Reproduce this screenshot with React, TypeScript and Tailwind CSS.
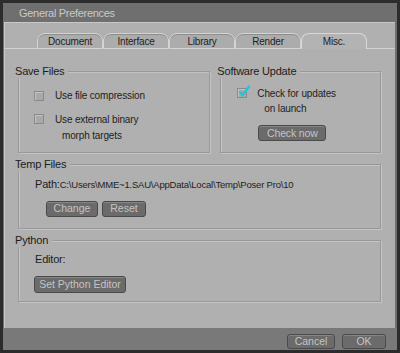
import type { ReactNode } from 'react';

const Btn = ({ children, className }: { children: ReactNode; className: string }) => (
  <button
    className={`rounded-[3px] border border-[#4a4a4a] bg-[#6b6b6b] text-[10.5px] leading-none text-[#c4c4c4] shadow-[inset_0_1px_0_#858585] ${className}`}
  >
    {children}
  </button>
);

const Box = ({ checked }: { checked?: boolean }) => (
  <span className="relative block h-[10px] w-[10px] shrink-0 border border-[#8a8a8a] bg-[#a9a9a9] shadow-[inset_1px_1px_0_#c2c2c2]">
    {checked && (
      <svg className="absolute -top-[4px] left-[0px]" width="13" height="12" viewBox="0 0 13 12">
        <path d="M1.5 6.5 L4.5 10 L11.5 1" fill="none" stroke="#19c4de" strokeWidth="2.2" />
      </svg>
    )}
  </span>
);

const Group = ({ title, className, children }: { title: string; className: string; children: ReactNode }) => (
  <div className={`relative border border-[#999999] shadow-[inset_1px_1px_0_#c3c3c3,1px_1px_0_#c3c3c3] ${className}`}>
    <span className="absolute -top-[8px] -left-[4px] bg-[#b0b0b0] pr-[4px] text-[11px] leading-[14px] tracking-[-0.2px] text-[#1c1c1c]">
      {title}
    </span>
    {children}
  </div>
);

const tabs = ['Document', 'Interface', 'Library', 'Render'];

export default function App() {
  return (
    <div className="flex h-[353px] w-[400px] flex-col bg-[#2c2c2c] p-[3px] font-['Liberation_Sans',Arial,sans-serif]">
      <div className="flex flex-1 flex-col bg-[#6f6f6f]">
        {/* Title */}
        <div className="flex h-[19px] items-center pl-[16px] pt-[2px] text-[11px] tracking-[-0.3px] text-[#c9c9c9]">
          General Preferences
        </div>

        {/* Main panel */}
        <div className="ml-[1px] mr-[2px] flex h-[306px] flex-col bg-[#b0b0b0] shadow-[inset_1px_1px_0_#c8c8c8]">
          {/* Tabs */}
          <div className="mt-[11px] flex h-[16px] items-end">
            <div className="h-full w-[33px] border-b border-[#d2d2d2]" />
            {tabs.map((t) => (
              <div
                key={t}
                className="flex h-full w-[66px] items-center justify-center rounded-t-[8px] border border-[#d4d4d4] bg-[#acacac] text-[10px] tracking-[-0.2px] text-[#1e1e1e] shadow-[inset_0_1px_0_#8e8e8e]"
              >
                {t}
              </div>
            ))}
            <div className="flex h-full w-[66px] items-center justify-center rounded-t-[8px] border border-b-0 border-[#d8d8d8] bg-[#b3b3b3] text-[10px] tracking-[-0.2px] text-[#1e1e1e]">
              Misc.
            </div>
            <div className="h-full flex-1 border-b border-[#d2d2d2]" />
          </div>

          <div className="flex flex-col px-[14px] pt-[22px]">
            {/* Row 1 */}
            <div className="flex h-[82px] gap-[10px]">
              <Group title="Save Files" className="w-[194px]">
                <div className="flex flex-col pl-[15px] pt-[16px] text-[10px] tracking-[-0.15px] text-[#1e1e1e]">
                  <div className="flex items-center gap-[11px]">
                    <Box />
                    <span>Use file compression</span>
                  </div>
                  <div className="mt-[11px] flex items-start gap-[11px]">
                    <Box />
                    <div className="-mt-[2px] flex flex-col leading-[16px]">
                      <span>Use external binary</span>
                      <span className="pl-[7px]">morph targets</span>
                    </div>
                  </div>
                </div>
              </Group>
              <Group title="Software Update" className="w-[162px]">
                <div className="flex flex-col pl-[16px] pt-[16px] text-[10px] tracking-[-0.15px] text-[#1e1e1e]">
                  <div className="flex items-start gap-[10px]">
                    <Box checked />
                    <div className="-mt-[2px] flex flex-col leading-[15px]">
                      <span>Check for updates</span>
                      <span className="pl-[7px]">on launch</span>
                    </div>
                  </div>
                  <Btn className="ml-[21px] mt-[9px] h-[16px] w-[68px]">Check now</Btn>
                </div>
              </Group>
            </div>

            {/* Temp Files */}
            <Group title="Temp Files" className="mt-[11px] h-[65px]">
              <div className="flex flex-col pl-[16px] pt-[11px]">
                <div className="flex items-baseline text-[#1e1e1e]">
                  <span className="text-[11px] tracking-[-0.2px]">Path:</span>
                  <span className="text-[9.5px] tracking-[-0.2px]">C:\Users\MME~1.SAU\AppData\Local\Temp\Poser Pro\10</span>
                </div>
                <div className="ml-[11px] mt-[8px] flex gap-[4px]">
                  <Btn className="h-[16px] w-[52px]">Change</Btn>
                  <Btn className="h-[16px] w-[44px]">Reset</Btn>
                </div>
              </div>
            </Group>

            {/* Python */}
            <Group title="Python" className="mt-[11px] h-[62px]">
              <div className="flex flex-col pl-[16px] pt-[10px]">
                <span className="text-[11px] tracking-[-0.2px] text-[#1e1e1e]">Editor:</span>
                <Btn className="-ml-[1px] mt-[8px] h-[17px] w-[92px]">Set Python Editor</Btn>
              </div>
            </Group>
          </div>
        </div>

        {/* Bottom bar */}
        <div className="flex flex-1 items-start justify-end gap-[7px] bg-[#797979] pr-[11px] pt-[6px]">
          <Btn className="h-[15px] w-[48px]">Cancel</Btn>
          <Btn className="h-[15px] w-[44px]">OK</Btn>
        </div>
      </div>
    </div>
  );
}
